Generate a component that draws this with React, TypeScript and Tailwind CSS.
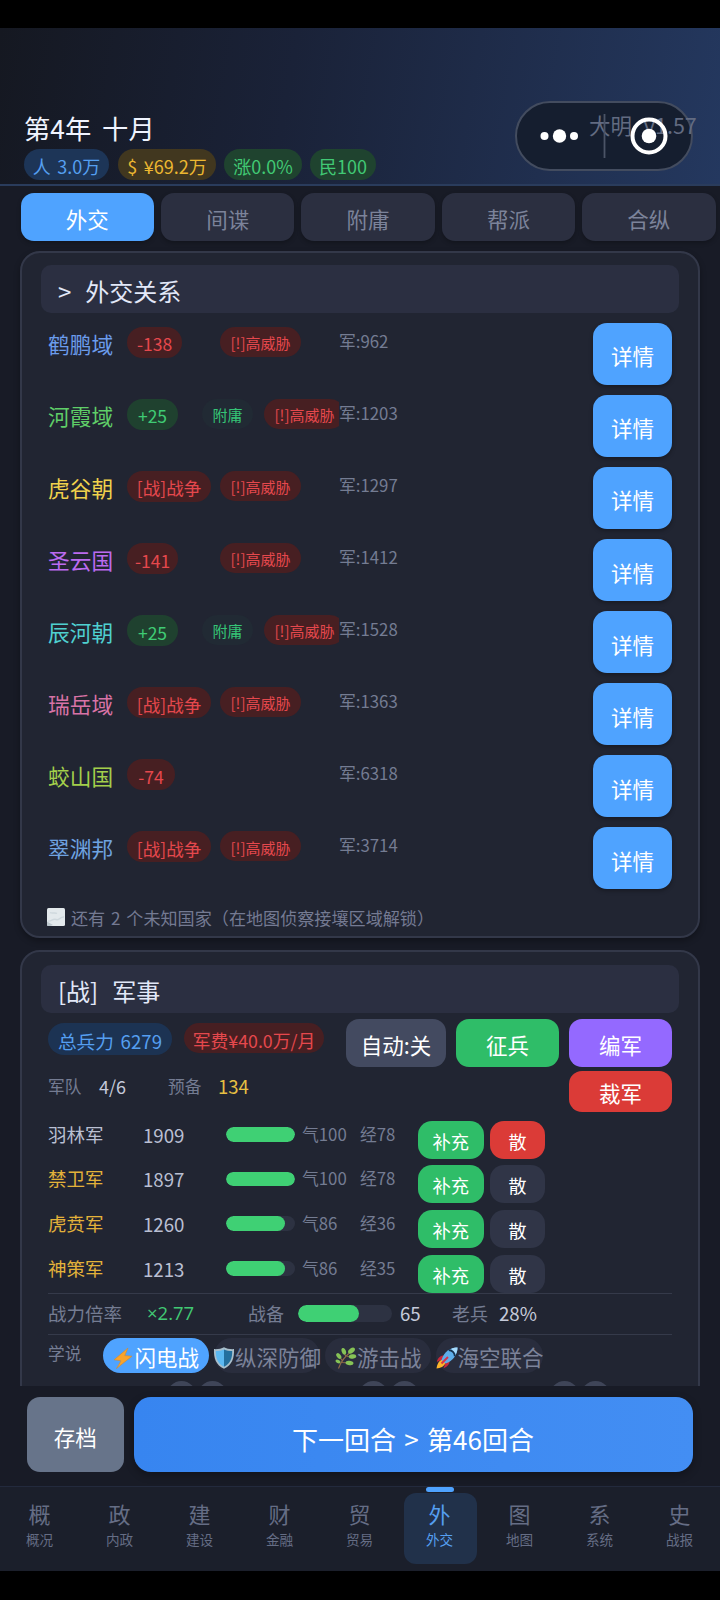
import { useState } from "react";
import type { ReactNode } from "react";
import clsx from "clsx";

type Nation = {
  name: string;
  color: string;
  relation: string;
  war?: boolean;
  good?: boolean;
  vassal?: boolean;
  threat?: boolean;
  army: number;
};

const nations: Nation[] = [
  { name: "鹤鹏域", color: "text-[#6b9cec]", relation: "-138", threat: true, army: 962 },
  { name: "河霞域", color: "text-[#5fce68]", relation: "+25", good: true, vassal: true, threat: true, army: 1203 },
  { name: "虎谷朝", color: "text-[#f0d24c]", relation: "[战]战争", war: true, threat: true, army: 1297 },
  { name: "圣云国", color: "text-[#bb6bf0]", relation: "-141", threat: true, army: 1412 },
  { name: "辰河朝", color: "text-[#4fd0d0]", relation: "+25", good: true, vassal: true, threat: true, army: 1528 },
  { name: "瑞岳域", color: "text-[#d873a6]", relation: "[战]战争", war: true, threat: true, army: 1363 },
  { name: "蛟山国", color: "text-[#a3cf4b]", relation: "-74", army: 6318 },
  { name: "翠渊邦", color: "text-[#6fa3e0]", relation: "[战]战争", war: true, threat: true, army: 3714 },
];

const armies = [
  { name: "羽林军", size: 1909, morale: 100, exp: 78, elite: false },
  { name: "禁卫军", size: 1897, morale: 100, exp: 78, elite: true },
  { name: "虎贲军", size: 1260, morale: 86, exp: 36, elite: true },
  { name: "神策军", size: 1213, morale: 86, exp: 35, elite: true },
];

const tabs = ["外交", "间谍", "附庸", "帮派", "合纵"];

const navItems = [
  ["概", "概况"],
  ["政", "内政"],
  ["建", "建设"],
  ["财", "金融"],
  ["贸", "贸易"],
  ["外", "外交"],
  ["图", "地图"],
  ["系", "系统"],
  ["史", "战报"],
];

function BoltIcon() {
  return (
    <svg viewBox="0 0 22 22" className="w-[22px] h-[22px] shrink-0 mt-[5px]">
      <path d="M16 1 2 12.800l7 1L4.500 21.500 20 9.200l-7.200-.6z" fill="#f9a32b" stroke="#c98a3a" strokeWidth=".6" />
    </svg>
  );
}

function ShieldIcon() {
  return (
    <svg viewBox="0 0 22 22" className="w-[22px] h-[22px] shrink-0 mt-[5px]">
      <path d="M11 .3C8.600 1.800 4.500 2.300 1 2.100.5 11 3 18.500 11 21.800 19 18.500 21.500 11 21 2.100 17.500 2.300 13.400 1.800 11 .3z" fill="#a9bfcc" />
      <path d="M11 2.400C8.600 3.600 5.500 4 2.800 4c-.2 7 1.800 12.600 8.200 15.800z" fill="#5cb9f2" />
      <path d="M11 2.400C13.400 3.600 16.500 4 19.200 4c.2 7-1.800 12.600-8.200 15.800z" fill="#23709f" />
    </svg>
  );
}

function HerbIcon() {
  return (
    <svg viewBox="0 0 22 22" className="w-[22px] h-[22px] shrink-0 mt-[5px]">
      <path d="M3.500 21.500C6 14 10 9 17 4M7.500 14 3.500 8M7 15.500l9 .5M11 10 8.500 4M12 9.500l6 .5" fill="none" stroke="#936b48" strokeWidth="1.100" />
      <g fill="#86c356">
        <ellipse cx="3.800" cy="9" rx="3.200" ry="2" transform="rotate(50 3.800 9)" />
        <ellipse cx="8.800" cy="4.300" rx="3.400" ry="2.100" transform="rotate(70 8.800 4.300)" />
        <ellipse cx="16.500" cy="3.600" rx="3.900" ry="2.300" transform="rotate(-38 16.500 3.600)" />
        <ellipse cx="17.500" cy="9.500" rx="3.800" ry="2.200" transform="rotate(-8 17.500 9.500)" />
        <ellipse cx="14.500" cy="16" rx="4" ry="2.200" transform="rotate(8 14.500 16)" />
        <ellipse cx="3" cy="14.500" rx="2.600" ry="1.700" transform="rotate(25 3 14.500)" />
      </g>
    </svg>
  );
}

function RocketIcon() {
  return (
    <svg viewBox="0 0 22 22" className="w-[22px] h-[22px] shrink-0 mt-[5px]">
      <path d="M6 12.500C2.500 14 1 18 .5 21.500 4.500 21 8 19.500 9.500 16z" fill="#fdb52c" />
      <path d="M8 8.500C5 8.500 2 10 .8 15L6 12.500zM13.500 13.500C14 16.500 12 19.500 7.500 21.300L9.500 16z" fill="#c9283a" />
      <path d="M21.500.500C14.500.500 8 4.500 5.500 13L9.500 16.500C17 14 21.500 7.500 21.500.500z" fill="#5eaeea" />
      <path d="M21.500.500C19 .500 17 1 15 1.900l5 5c1-2 1.500-4.200 1.500-6.400z" fill="#a6dafb" />
      <path d="M12.800 3.200c3.600.3 5.600 2.300 6 6" stroke="#17324f" strokeWidth="1.700" fill="none" />
      <path d="m12 10-6.500 6.500" stroke="#d8314a" strokeWidth="1.900" />
    </svg>
  );
}

function MapIcon() {
  return (
    <svg viewBox="0 0 18 18" className="w-[18px] h-[18px] shrink-0 -ml-px">
      <rect width="18" height="18" rx="1.500" fill="#e3e9ec" />
      <path d="M1 13c3 1 5-3 8-1.500s4-3 8-2.500M3 4.500c2 1.500 5-.5 7 1" stroke="#cfd8dd" strokeWidth="1.400" fill="none" />
      <path d="M0 13.500 6 17l-3 1H1.500A1.500 1.500 0 0 1 0 16.500z" fill="#bcc7cd" />
    </svg>
  );
}

const doctrines: { name: string; icon: ReactNode; active?: boolean }[] = [
  { name: "闪电战", icon: <BoltIcon />, active: true },
  { name: "纵深防御", icon: <ShieldIcon /> },
  { name: "游击战", icon: <HerbIcon /> },
  { name: "海空联合", icon: <RocketIcon /> },
];

function Stat({ className, children }: { className: string; children: ReactNode }) {
  return (
    <span
      className={clsx(
        "h-[31px] rounded-full flex items-center justify-center text-[18px] pt-[5px] [word-spacing:2.5px]",
        className,
      )}
    >
      {children}
    </span>
  );
}

function SectionTitle({ mark, title }: { mark: string; title: string }) {
  return (
    <div className="h-12 ml-5 mr-5 rounded-[10px] bg-[#2b2f41] flex items-center pl-[17px] pt-[4px] text-[24px] text-[#e2e8f8]">
      <span>{mark}</span>
      <span className="ml-[14px]">{title}</span>
    </div>
  );
}

function NationRow({ nation }: { nation: Nation }) {
  return (
    <div className="h-[72.050px] flex items-start pt-[3px]">
      <span className={clsx("w-[79px] h-[38px] leading-[35px] text-[21.700px] shrink-0", nation.color)}>{nation.name}</span>
      <div className="w-[212px] h-[38px] flex items-start overflow-hidden shrink-0 pt-px">
        <span
          className={clsx(
            "h-[31px] rounded-full flex items-center justify-center text-[17.500px] pt-[4px] shrink-0",
            nation.good ? "bg-[#1f412f] text-[#3fcb74] w-[51px]" : "bg-[#471f22] text-[#e5484d]",
            nation.war && "w-[84px]",
            !nation.good && !nation.war && (nation.relation.endsWith("8") ? "w-[55px]" : nation.relation.length > 3 ? "w-[51px]" : "w-[48px]"),
          )}
        >
          {nation.relation}
        </span>
        {nation.vassal && (
          <span className="h-[30px] w-[51px] ml-[24px] rounded-full bg-[#212a34] text-[#35c476] text-[15px] pt-[3px] flex items-center justify-center shrink-0">
            附庸
          </span>
        )}
        {nation.threat && (
          <span
            className={clsx(
              "h-[30px] w-[81px] rounded-full bg-[#471f22] text-[#e5484d] text-[15px] pt-[3px] flex items-center justify-center shrink-0",
              nation.vassal ? "ml-[11px]" : nation.war ? "ml-[9px]" : "ml-auto mr-[38px]",
            )}
          >
            [!]高威胁
          </span>
        )}
      </div>
      <span className="h-8 leading-[31px] text-[16.800px] text-[#747c92]">军:{nation.army}</span>
      <button className="ml-auto w-[79px] h-[62px] -mt-[3px] rounded-[14px] bg-[#4fa3ff] text-white text-[21.500px] pt-[5px] shadow-[0_2px_4px_rgba(0,0,0,0.3)]">
        详情
      </button>
    </div>
  );
}

function Meter({ value, className }: { value: number; className: string }) {
  return (
    <div className={clsx("rounded-full bg-[#2d3242] overflow-hidden shrink-0", className)}>
      <div className="h-full rounded-full bg-[#3fd074]" style={{ width: `${value}%` }} />
    </div>
  );
}

export default function App() {
  const [activeTab, setActiveTab] = useState("外交");
  const [activeNav, setActiveNav] = useState("外交");

  return (
    <div className="w-[720px] h-[1600px] bg-black flex flex-col overflow-hidden whitespace-nowrap pt-7 [font-family:'Noto_Sans_CJK_SC',sans-serif]">
      {/* 顶部状态栏 */}
      <header className="relative h-[158px] shrink-0 bg-[linear-gradient(100deg,#151821_0%,#1a2238_40%,#24385f_100%)] border-b-2 border-[#2a3c5c] pl-6">
        <h1 className="pt-[81px] h-[120px] leading-[38px] text-[26.300px] text-[#f0f4ff] [word-spacing:5px]">第4年 十月</h1>
        <div className="flex pt-[0.500px]">
          <Stat className="w-[85px] bg-[#1d3557] text-[#559ff0]">人 3.0万</Stat>
          <Stat className="w-[98px] ml-[9px] bg-[#41371f] text-[#ecb731]">$ ¥69.2万</Stat>
          <Stat className="w-[78px] ml-[8px] bg-[#1f432f] text-[#41c974]">涨0.0%</Stat>
          <Stat className="w-[66px] ml-[8px] bg-[#1f432f] text-[#41c974]">民100</Stat>
        </div>
        {/* 小程序胶囊按钮 */}
        <div className="absolute left-[515px] top-[73px] w-[178px] h-[70px] rounded-full border-2 border-[#434c5f] bg-[#151e2f]" />
        <span className="absolute left-[589px] top-[81px] leading-8 text-[21.500px] text-[#626b81] [word-spacing:7px]">大明 v1.57</span>
        <svg className="absolute left-[515px] top-[73px]" width="178" height="70" viewBox="0 0 178 70">
          <g fill="#fff">
            <circle cx="29.500" cy="35" r="4" />
            <circle cx="44.500" cy="35" r="6.700" />
            <circle cx="59" cy="35" r="4" />
            <circle cx="134" cy="35" r="7.300" />
          </g>
          <circle cx="134" cy="35" r="16.500" fill="none" stroke="#fff" strokeWidth="4" />
          <path d="M89.500 13v44" stroke="#4b5466" strokeWidth="1.800" />
        </svg>
      </header>

      <main className="h-[1200px] shrink-0 bg-[#181b26] overflow-hidden">
        <div className="flex gap-[6.800px] pl-[20.500px] pt-[7px]">
          {tabs.map((tab) => (
            <button
              key={tab}
              onClick={() => setActiveTab(tab)}
              className={clsx(
                "w-[133.600px] h-12 rounded-[13px] shrink-0 text-[21.500px] pt-[5px] shadow-[0_2px_4px_rgba(0,0,0,0.25)]",
                activeTab === tab ? "bg-[#4fa3ff] text-white" : "bg-[#2b2f40] text-[#7c839a]",
              )}
            >
              {tab}
            </button>
          ))}
        </div>

        {/* 外交关系 */}
        <section className="ml-5 mr-5 mt-[10px] h-[687px] rounded-[20px] border-2 border-[#333849] bg-[#212532] pt-[12px] shadow-[0_3px_6px_rgba(0,0,0,0.3)]">
          <div className="-ml-px -mr-px">
            <SectionTitle mark=">" title="外交关系" />
            <div className="mt-[10px] pl-[27px] pr-[27px]">
              {nations.map((nation) => (
                <NationRow key={nation.name} nation={nation} />
              ))}
              <div className="flex items-center gap-[6px] h-8 mt-[2px] text-[17.100px] text-[#747a92] [word-spacing:2px]">
                <MapIcon />
                还有 2 个未知国家（在地图侦察接壤区域解锁）
              </div>
            </div>
          </div>
        </section>

        {/* 军事 */}
        <section className="ml-5 mr-5 mt-[12px] h-[520px] rounded-[20px] border-2 border-[#333849] bg-[#212532] pt-[13px]">
          <div className="-ml-px -mr-px">
            <SectionTitle mark="[战]" title="军事" />
            <div className="pl-[27px] pr-[27px] pt-[6px]">
              <div className="flex items-start h-[52px]">
                <span className="mt-[4px] w-[124px] h-8 rounded-full bg-[#1c3353] text-[#559ff0] text-[18.700px] pt-[4px] flex items-center justify-center [word-spacing:2.5px]">
                  总兵力 6279
                </span>
                <span className="mt-[4px] ml-[12px] w-[140px] h-[30px] rounded-full bg-[#471f22] text-[#e5484d] text-[17.800px] pt-[4px] flex items-center justify-center">
                  军费¥40.0万/月
                </span>
                <button className="ml-auto w-[100px] h-12 rounded-[13px] bg-[#434a60] text-white text-[21.500px] pt-[5px]">自动:关</button>
                <button className="ml-[10px] w-[103px] h-12 rounded-[13px] bg-[#2fbd68] text-white text-[21.500px] pt-[5px]">征兵</button>
                <button className="ml-[10px] w-[103px] h-12 rounded-[13px] bg-[#9469ff] text-white text-[21.500px] pt-[5px]">编军</button>
              </div>
              <div className="flex items-start h-[49.500px] leading-[30px] text-[#747c92] text-[16.700px]">
                <span className="w-[51px]">军队</span>
                <span className="w-[69px] text-[18px] text-[#c5cada]">4/6</span>
                <span className="w-[50px]">预备</span>
                <span className="text-[18.500px] text-[#e6c043]">134</span>
                <button className="ml-auto w-[103px] h-[41px] rounded-[13px] bg-[#db3b37] text-white text-[21.500px] pt-[3px]">裁军</button>
              </div>

              {armies.map((army) => (
                <div key={army.name} className="flex items-start h-[44.700px] leading-[27px]">
                  <span className={clsx("w-[95px] text-[18.500px]", army.elite ? "text-[#e3b23a]" : "text-[#b9bfd2]")}>{army.name}</span>
                  <span className="w-[83px] text-[18.700px] text-[#b9bfd2]">{army.size}</span>
                  <Meter value={army.morale} className="w-[69px] h-[14.500px] mt-[6.500px]" />
                  <span className="w-[58px] ml-[7px] text-[16.800px] text-[#747c92]">气{army.morale}</span>
                  <span className="w-[58px] text-[16.800px] text-[#747c92]">经{army.exp}</span>
                  <button className="w-[65.500px] h-[38px] rounded-[14px] bg-[#2fbd68] text-white text-[18.300px] pt-[3px]">补充</button>
                  <button
                    className={clsx(
                      "w-[55px] h-[38px] ml-[6.500px] rounded-[14px] text-white text-[18px] pt-[3px]",
                      army.elite ? "bg-[#303547]" : "bg-[#db3b37]",
                    )}
                  >
                    散
                  </button>
                </div>
              ))}

              <div className="-mt-[6.500px] h-[41px] border-t border-[#353a4a] flex items-center text-[18px] leading-[26px] text-[#747c92]">
                <span className="w-[99px] text-[18.500px] -mt-[2px]">战力倍率</span>
                <span className="w-[101px] text-[18.500px] -mt-[2px] text-[#41c974] [font-family:'Open_Sans','Noto_Sans_CJK_SC',sans-serif]">×2.77</span>
                <span className="w-[50px] -mt-[2px]">战备</span>
                <Meter value={65} className="w-[94px] h-[17.500px] -mt-px" />
                <span className="w-[52px] ml-[8px] -mt-[2px] text-[18.700px] text-[#c5cada]">65</span>
                <span className="w-[47px] -mt-[2px]">老兵</span>
                <span className="-mt-[2px] text-[18.700px] text-[#c5cada]">28%</span>
              </div>

              <div className="border-t border-[#353a4a] flex pt-[3px]">
                <span className="w-[54.500px] text-[16.700px] leading-[30px] text-[#747c92]">学说</span>
                <div className="flex gap-[5px]">
                  {doctrines.map((d) => (
                    <button
                      key={d.name}
                      className={clsx(
                        "w-[106.300px] h-[35px] rounded-full flex items-center justify-center text-[21.500px] shrink-0",
                        d.active ? "bg-[#4fa3ff] text-white" : "bg-[#292d3d] text-[#7c839a]",
                      )}
                    >
                      {d.icon}
                      <span className="pt-[3px] leading-[31px]">{d.name}</span>
                    </button>
                  ))}
                </div>
              </div>

              {/* 加减按钮 */}
              <div className="flex mt-[8px] pl-[119px] gap-[131.500px]">
                {[0, 1, 2].map((i) => (
                  <div key={i} className="flex gap-[2px]">
                    <span className="w-[29px] h-[29px] rounded-full bg-[#3f4558]" />
                    <span className="w-[29px] h-[29px] rounded-full bg-[#3f4558]" />
                  </div>
                ))}
              </div>
            </div>
          </div>
        </section>
      </main>

      <div className="h-[100px] shrink-0 bg-[#181b26] flex pt-[10.500px] pl-[27px]">
        <button className="w-[96.500px] h-[75.500px] rounded-[13px] bg-[#67748a] text-white text-[21.500px] pt-[5px]">存档</button>
        <button className="ml-[10px] w-[559px] h-[75.500px] rounded-[17px] bg-linear-to-r from-[#3785f0] to-[#438ef3] text-white text-[26px] pt-[9px] shadow-[0_3px_8px_rgba(0,0,0,0.3)] [word-spacing:2.5px]">
          下一回合 &gt; 第46回合
        </button>
      </div>

      {/* 底部导航 */}
      <nav className="h-[85px] shrink-0 bg-[#1b1f2b] border-t border-[#232a3d] flex">
        {navItems.map(([icon, label]) => {
          const active = activeNav === label;
          return (
            <button
              key={label}
              onClick={() => setActiveNav(label)}
              className={clsx("w-20 shrink-0 flex flex-col items-center", active ? "text-[#559ff0]" : "text-[#656d85]")}
            >
              <span className={clsx("w-7 h-[5px] rounded-full", active && "bg-[#4fa3ff]")} />
              <span
                className={clsx("w-[73px] h-[71px] mt-px pr-px rounded-xl flex flex-col items-center", active && "bg-[#21314a]")}
              >
                <span className="text-[22px] leading-[30px] mt-[5px]">{icon}</span>
                <span className="text-[13.600px] leading-5 mt-px">{label}</span>
              </span>
            </button>
          );
        })}
      </nav>
    </div>
  );
}
